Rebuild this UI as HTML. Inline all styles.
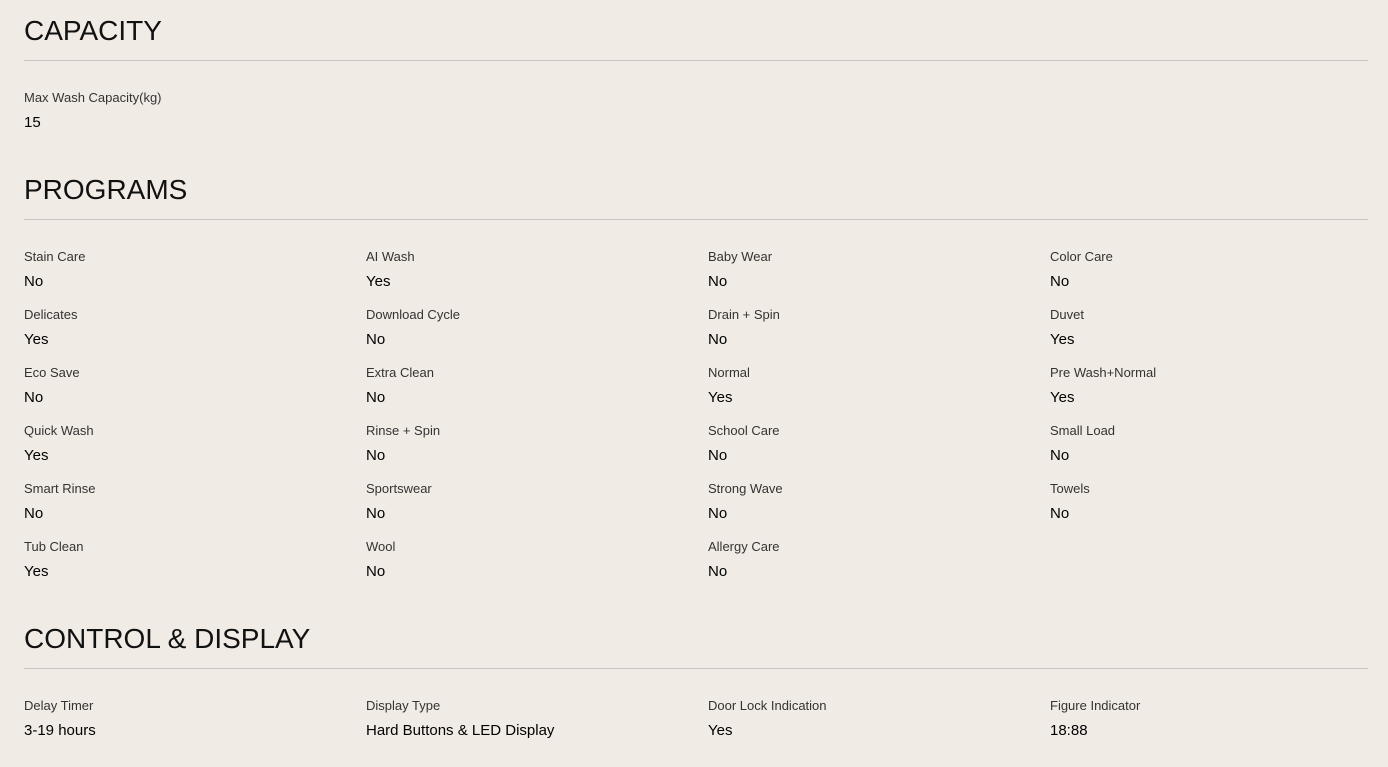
<!DOCTYPE html>
<html><head><meta charset="utf-8"><style>
body{margin:0;width:1388px;height:767px;background:#f0ebe4;font-family:"Liberation Sans",sans-serif;color:#000;position:relative;overflow:hidden}
.h{position:absolute;left:24px;font-size:28px;line-height:30px;color:#111}
.ln{position:absolute;left:24px;width:1344px;height:1px;background:#c9c5c0}
.c{position:absolute;width:330px}
.l{font-size:13px;color:#333;line-height:16px;height:16px}
.v{font-size:15px;color:#000;line-height:18px;margin-top:8px}
</style></head><body>
<div class="h" style="top:16px">CAPACITY</div><div class="ln" style="top:60px"></div>
<div class="c" style="left:24px;top:90px"><div class="l">Max Wash Capacity(kg)</div><div class="v">15</div></div>
<div class="h" style="top:175px">PROGRAMS</div><div class="ln" style="top:219px"></div>
<div class="h" style="top:624px">CONTROL &amp; DISPLAY</div><div class="ln" style="top:668px"></div>
<div id="p"></div>
<script>
var d=[["Stain Care","No"],["AI Wash","Yes"],["Baby Wear","No"],["Color Care","No"],["Delicates","Yes"],["Download Cycle","No"],["Drain + Spin","No"],["Duvet","Yes"],["Eco Save","No"],["Extra Clean","No"],["Normal","Yes"],["Pre Wash+Normal","Yes"],["Quick Wash","Yes"],["Rinse + Spin","No"],["School Care","No"],["Small Load","No"],["Smart Rinse","No"],["Sportswear","No"],["Strong Wave","No"],["Towels","No"],["Tub Clean","Yes"],["Wool","No"],["Allergy Care","No"]];
var h="";d.forEach(function(x,i){h+='<div class="c" style="left:'+(24+342*(i%4))+'px;top:'+(249+58*Math.floor(i/4))+'px"><div class="l">'+x[0]+'</div><div class="v">'+x[1]+'</div></div>'});
var e=[["Delay Timer","3-19 hours"],["Display Type","Hard Buttons &amp; LED Display"],["Door Lock Indication","Yes"],["Figure Indicator","18:88"]];
e.forEach(function(x,i){h+='<div class="c" style="left:'+(24+342*i)+'px;top:698px"><div class="l">'+x[0]+'</div><div class="v">'+x[1]+'</div></div>'});
document.getElementById("p").innerHTML=h;
</script>
</body></html>
